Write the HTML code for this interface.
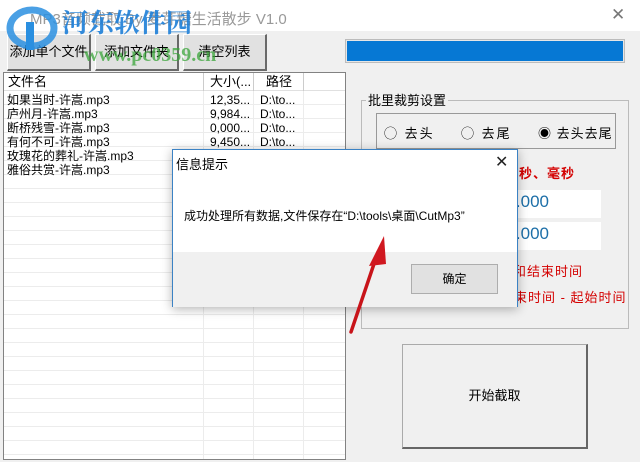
<!DOCTYPE html>
<html><head><meta charset="utf-8"><style>
*{margin:0;padding:0;box-sizing:border-box}
body{width:640px;height:462px;overflow:hidden;background:#f0f0f0;font-family:"Liberation Sans","Noto Sans CJK SC",sans-serif;font-size:12px;color:#000;position:relative}
.a{position:absolute}
.btn{position:absolute;background:#e1e1e1;border:1px solid #fff;border-right:2px solid #696969;border-bottom:2px solid #696969;text-align:center;font-size:13px}
.cell{position:absolute;font-size:12px;white-space:nowrap;line-height:14px}
.red{color:#d40000;font-size:13px;white-space:nowrap}
</style></head><body>
<div class="a" style="left:0;top:0;width:640px;height:31px;background:#fff"></div>
<div class="a" style="left:30px;top:8px;font-size:15px;color:#999">MP3音频截取 By 麦芽糖生活散步 V1.0</div>
<div class="a" style="left:611px;top:5px;font-size:17px;color:#777">✕</div>

<div class="btn" style="left:7px;top:34px;width:84px;height:37px;line-height:33px">添加单个文件</div>
<div class="btn" style="left:95px;top:34px;width:84px;height:37px;line-height:33px">添加文件夹</div>
<div class="btn" style="left:183px;top:34px;width:84px;height:37px;line-height:33px">清空列表</div>

<svg class="a" style="left:4px;top:4px;z-index:5" width="60" height="52"><ellipse cx="28" cy="24" rx="22" ry="18" fill="none" stroke="#2a8fe0" stroke-width="7" opacity=".85"/><rect x="22" y="18" width="8" height="28" fill="#2a8fe0"/></svg>
<div class="a" style="left:62px;top:6px;font-size:26px;line-height:32px;font-weight:bold;color:#1e7fd8;font-family:'Noto Serif CJK SC',serif;opacity:.9;z-index:5">河东软件园</div>
<div class="a" style="left:84px;top:44px;font-size:20px;font-weight:bold;color:#3aa53a;opacity:.75;font-family:'Liberation Serif',serif;z-index:5">www.pc0359.cn</div>

<div class="a" style="left:345px;top:39px;width:280px;height:24px;border:1px solid #bcbcbc;background:#e6e6e6;padding:1px"><div style="width:100%;height:100%;background:#0678d4"></div></div>

<div class="a" style="left:3px;top:72px;width:343px;height:388px;background:#fff;border:1px solid #828282;overflow:hidden">
<div class="a" style="left:0;top:18px;width:343px;height:380px;background:repeating-linear-gradient(#fff 0 13px,#ececec 13px 14px)"></div>
<div class="a" style="left:199px;top:18px;width:1px;height:380px;background:#ececec"></div>
<div class="a" style="left:249px;top:18px;width:1px;height:380px;background:#ececec"></div>
<div class="a" style="left:299px;top:18px;width:1px;height:380px;background:#ececec"></div>
<div class="a" style="left:0;top:0;width:343px;height:18px;background:#fff;border-bottom:1px solid #e0e0e0"></div>
<div class="a" style="left:199px;top:0;width:1px;height:18px;background:#ccc"></div>
<div class="a" style="left:249px;top:0;width:1px;height:18px;background:#ccc"></div>
<div class="a" style="left:299px;top:0;width:1px;height:18px;background:#ccc"></div>
<div class="cell" style="left:4px;top:2px;font-size:13px">文件名</div>
<div class="cell" style="left:206px;top:2px;font-size:13px">大小(...</div>
<div class="cell" style="left:262px;top:2px;font-size:13px">路径</div>
<div class="cell" style="left:3px;top:20px">如果当时-许嵩.mp3</div><div class="cell" style="left:206px;top:20px">12,35...</div><div class="cell" style="left:256px;top:20px">D:\to...</div>
<div class="cell" style="left:3px;top:34px">庐州月-许嵩.mp3</div><div class="cell" style="left:206px;top:34px">9,984...</div><div class="cell" style="left:256px;top:34px">D:\to...</div>
<div class="cell" style="left:3px;top:48px">断桥残雪-许嵩.mp3</div><div class="cell" style="left:206px;top:48px">0,000...</div><div class="cell" style="left:256px;top:48px">D:\to...</div>
<div class="cell" style="left:3px;top:62px">有何不可-许嵩.mp3</div><div class="cell" style="left:206px;top:62px">9,450...</div><div class="cell" style="left:256px;top:62px">D:\to...</div>
<div class="cell" style="left:3px;top:76px">玫瑰花的葬礼-许嵩.mp3</div>
<div class="cell" style="left:3px;top:90px">雅俗共赏-许嵩.mp3</div>
</div>

<div class="a" style="left:361px;top:100px;width:268px;height:229px;border:1px solid #bbb"></div>
<div class="a" style="left:366px;top:90px;background:#f0f0f0;padding:0 2px;font-size:13px">批里裁剪设置</div>
<div class="a" style="left:376px;top:113px;width:240px;height:36px;border:1px solid #999"></div>
<div class="a" style="left:384px;top:123px;font-size:13px;letter-spacing:2px">◯ 去头</div>
<div class="a" style="left:461px;top:123px;font-size:13px;letter-spacing:2px">◯ 去尾</div>
<div class="a" style="left:538px;top:123px;font-size:13px;letter-spacing:1px">◉ 去头去尾</div>
<div class="a red" style="left:491px;top:163px;font-weight:bold;letter-spacing:1px">时分秒、毫秒</div>
<div class="a" style="left:505px;top:190px;width:96px;height:28px;background:#fff"></div>
<div class="a" style="left:505px;top:222px;width:96px;height:28px;background:#fff"></div>
<div class="a" style="left:497px;top:192px;font-size:17px;color:#1d6fa8">00.000</div>
<div class="a" style="left:497px;top:224px;font-size:17px;color:#1d6fa8">00.000</div>
<div class="a red" style="left:485px;top:261px;letter-spacing:1px">起始和结束时间</div>
<div class="a red" style="left:500px;top:287px;letter-spacing:1px">结束时间 - 起始时间</div>
<div class="btn" style="left:402px;top:344px;width:186px;height:105px;line-height:101px;background:#f0f0f0;border:1px solid #aaa;border-right:2px solid #666;border-bottom:2px solid #666">开始截取</div>

<div class="a" style="left:172px;top:149px;width:346px;height:158px;background:#fff;border:1px solid #3b82c4;box-shadow:0 2px 10px rgba(0,0,0,.3);z-index:6">
<div class="a" style="left:3px;top:4px;font-size:13px">信息提示</div>
<div class="a" style="left:322px;top:2px;font-size:16px;color:#222">✕</div>
<div class="a" style="left:11px;top:57px;font-size:12px">成功处理所有数据,文件保存在“D:\tools\桌面\CutMp3”</div>
<div class="a" style="left:0;top:102px;width:344px;height:55px;background:#f0f0f0"></div>
<div class="a" style="left:238px;top:114px;width:87px;height:30px;background:#e1e1e1;border:1px solid #adadad;text-align:center;line-height:28px">确定</div>
</div>

<svg class="a" style="left:340px;top:230px;z-index:7" width="60" height="110"><line x1="11" y1="102" x2="38" y2="22" stroke="#c8141a" stroke-width="3.5" stroke-linecap="round"/><polygon points="44,6 29,36 46,34" fill="#d01820"/></svg>
</body></html>
